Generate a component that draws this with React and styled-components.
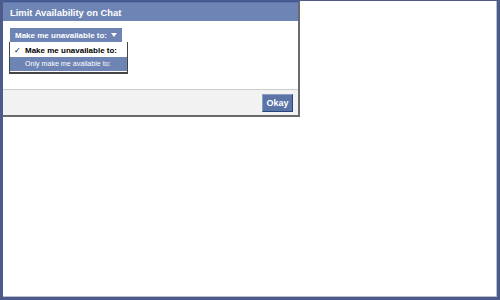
import React from 'react';
import styled, { createGlobalStyle } from 'styled-components';

const GlobalStyle = createGlobalStyle`
  html, body {
    margin: 0;
    padding: 0;
    background: #ffffff;
  }
  body {
    font-family: "Liberation Sans", Arial, sans-serif;
  }
`;

const Frame = styled.div`
  box-sizing: border-box;
  width: 500px;
  height: 300px;
  border: 3px solid #4c5b89;
  border-top-width: 1px;
  background: #ffffff;
  box-shadow: inset -1px -1px 0 #b9bfcc;
`;

const Dialog = styled.div`
  box-sizing: border-box;
  width: 297px;
  display: flex;
  flex-direction: column;
  border-top: 1px solid #3b5998;
  border-right: 2px solid #6a6a6a;
  border-bottom: 2px solid #6a6a6a;
`;

const Header = styled.div`
  height: 18px;
  background: #6d84b4;
  border-top: 1px solid #5f77aa;
  color: #ffffff;
  font-size: 9.4px;
  font-weight: bold;
  display: flex;
  align-items: center;
  padding-left: 7px;
`;

const Body = styled.div`
  height: 68px;
  background: #ffffff;
  padding: 7px 0 0 7px;
  box-sizing: border-box;
  position: relative;
`;

const DropButton = styled.div`
  display: flex;
  width: max-content;
  align-items: center;
  gap: 4px;
  height: 14px;
  padding: 0 5px 0 5px;
  background: #6d84b4;
  color: #ffffff;
  font-size: 8px;
  font-weight: bold;
  white-space: nowrap;
`;

const Arrow = styled.span`
  width: 0;
  height: 0;
  border-left: 3px solid transparent;
  border-right: 3px solid transparent;
  border-top: 4px solid #ffffff;
`;

const Menu = styled.div`
  position: absolute;
  left: 6px;
  top: 21px;
  width: 117px;
  background: #ffffff;
  border: 1px solid #444444;
  border-top: none;
  border-bottom: 2px solid #444444;
  padding: 1px 0 1px;
`;

const Item = styled.div`
  height: 14px;
  display: flex;
  align-items: center;
  white-space: nowrap;
  padding-left: 15px;
  position: relative;
  color: ${p => (p.active ? '#ffffff' : '#000000')};
  background: ${p => (p.active ? '#6d84b4' : 'transparent')};
  font-size: ${p => (p.checked ? '8px' : '7.1px')};
  font-weight: ${p => (p.checked ? 'bold' : 'normal')};
`;

const Check = styled.span`
  position: absolute;
  left: 4px;
  font-family: "DejaVu Sans", sans-serif;
  font-size: 8px;
`;

const Footer = styled.div`
  height: 25px;
  background: #f2f2f2;
  border-top: 1px solid #cccccc;
  display: flex;
  align-items: center;
  justify-content: flex-end;
  padding-right: 5px;
`;

const OkayButton = styled.button`
  height: 18px;
  width: 31px;
  padding: 0;
  background: #5b74a8;
  border: 1px solid #29447e;
  border-color: #8a9cc2 #29447e #29447e #8a9cc2;
  color: #ffffff;
  font-family: inherit;
  font-size: 9px;
  font-weight: bold;
`;

export default function App() {
  return (
    <>
      <GlobalStyle />
      <Frame>
        <Dialog>
          <Header>Limit Availability on Chat</Header>
          <Body>
            <DropButton>
              Make me unavailable to:
              <Arrow />
            </DropButton>
            <Menu>
              <Item checked>
                <Check>✓</Check>
                Make me unavailable to:
              </Item>
              <Item active>Only make me available to:</Item>
            </Menu>
          </Body>
          <Footer>
            <OkayButton>Okay</OkayButton>
          </Footer>
        </Dialog>
      </Frame>
    </>
  );
}
